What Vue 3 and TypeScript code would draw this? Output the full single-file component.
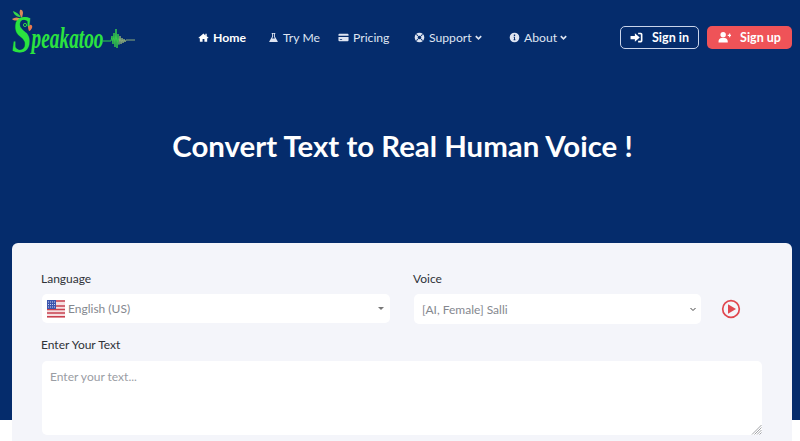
<template>
  <div class="page">
    <div class="hero">
      <header class="topbar">
        <a class="logo" aria-label="Speakatoo">
          <svg class="logo-svg" width="140" height="58" viewBox="0 0 140 58">
            <path d="M20 10c1-1 3 0 3 3l-1 5c-2-2-3-5-2-8z" fill="#d9895a" />
            <path d="M13 11c3 1 6 3 8 6-4 0-7-2-8-6z" fill="#35d64a" />
            <path d="M12 19c3-2 6-2 9 0-3 2-7 2-9 0z" fill="#e08a55" />
            <path d="M28 25c3-1 5 0 4 3-1 2-2 3-3 3-1-2-1-4-1-6z" fill="#e8794e" />
            <circle cx="25" cy="25" r="1.600" fill="none" stroke="#2fd24a" stroke-width="1" />
            <text class="logo-word" transform="translate(12 52) scale(.84 1.250)"><tspan class="logo-cap">S</tspan><tspan class="logo-rest" dy="-3.500">peakatoo</tspan></text>
            <path d="M103 41h8" fill="none" stroke="#2fd24a" stroke-width="1" />
            <path d="M111 41l1-5 1 8 1-11 1 14 1-18 1 19 1-14 1 11" fill="none" stroke="#36c94b" stroke-width="1" />
            <path d="M119 44l1-8 1 8 1-6 1 5 1-4 1 3 1-2h9" fill="none" stroke="#8aa97a" stroke-width="1" />
          </svg>
        </a>

        <nav class="menu">
          <a v-for="item in menu" :key="item.label" class="menu-item" :class="{ active: item.active }" :style="{ width: item.width + 'px' }">
            <svg class="ico" viewBox="0 0 24 24" fill="currentColor"><path :d="item.icon" fill-rule="evenodd" /></svg>
            <span>{{ item.label }}</span>
            <svg v-if="item.drop" class="chev" viewBox="0 0 10 10"><path d="M2 3.500 5 6.500 8 3.500" fill="none" stroke="currentColor" stroke-width="1.800" /></svg>
          </a>
        </nav>

        <div class="auth">
          <a class="btn btn-line">
            <svg class="btn-ico" viewBox="0 0 24 24" fill="currentColor"><path d="M1 9h8V4l9 8-9 8v-5H1zM15 3h5a3 3 0 0 1 3 3v12a3 3 0 0 1-3 3h-5v-3h4a1 1 0 0 0 1-1V7a1 1 0 0 0-1-1h-4z" /></svg>
            Sign in
          </a>
          <a class="btn btn-red">
            <svg class="btn-ico" viewBox="0 0 24 24" fill="currentColor"><circle cx="9.500" cy="7" r="5" /><path d="M1 21v-2c0-3.500 2.500-6 5.500-6h6c3 0 5.500 2.500 5.500 6v2zM18 7h2.500V4.500h2V7H25v2h-2.500v2.500h-2V9H18z" /></svg>
            Sign up
          </a>
        </div>
      </header>

      <h1 class="title">Convert Text to Real Human Voice !</h1>
    </div>

    <main class="card">
      <div class="row">
        <div class="field lang">
          <label>Language</label>
          <div class="lang-box">
            <svg class="flag" width="18" height="18" viewBox="0 0 18 18">
              <rect width="18" height="18" fill="#f6dfe1" />
              <path d="M0 1h18M0 6h18M0 9.500h18M0 13h18M0 16.800h18" stroke="#c8414f" stroke-width="1.500" />
              <rect width="9" height="9" fill="#3c55ad" />
              <path d="M1 2h7M1 4.500h7M1 7h7" stroke="#c9d2f0" stroke-width="1" stroke-dasharray="1 1" />
            </svg>
            <span>English (US)</span>
            <i class="caret"></i>
          </div>
        </div>
        <div class="field voice">
          <label>Voice</label>
          <div class="voice-line">
            <div class="voice-wrap">
              <select class="voice-select">
                <option>[AI, Female] Salli</option>
              </select>
              <svg class="voice-chev" width="8" height="8" viewBox="0 0 8 8"><path d="M1.500 3 4 5.500 6.500 3" fill="none" stroke="#444" stroke-width="1" /></svg>
            </div>
            <svg class="play" width="20" height="20" viewBox="0 0 20 20">
              <circle cx="10" cy="10" r="8.300" fill="none" stroke="#e0474f" stroke-width="1.700" />
              <path d="M7 5.200 15 10 7 14.800z" fill="#e0474f" />
            </svg>
          </div>
        </div>
      </div>
      <label class="text-label">Enter Your Text</label>
      <div class="text-wrap">
        <textarea class="text" placeholder="Enter your text..."></textarea>
        <svg class="grip" width="11" height="11" viewBox="0 0 11 11"><path d="M10.500 1 1 10.500M10.500 3.500 3.500 10.500M10.500 6 6 10.500M10.500 8.500 8.500 10.500" stroke="#8b8d92" stroke-width="0.800" /></svg>
      </div>
    </main>
  </div>
</template>

<script setup lang="ts">
interface MenuItem {
  label: string
  icon: string
  width: number
  active?: boolean
  drop?: boolean
}

const menu: MenuItem[] = [
  { label: 'Home', active: true, width: 70, icon: 'M12 3 1 12.500l1.500 1.500L4 12.800V21h6v-6h4v6h6v-8.200l1.500 1.200 1.500-1.500-4-3.400V4h-3v3.500z' },
  { label: 'Try Me', width: 70, icon: 'M8 2h8v2h-1v6l6 10c.6 1-.1 2-1 2H4c-.9 0-1.600-1-1-2l6-10V4H8zM11 4v6.500L9 14h6l-2-3.500V4z' },
  { label: 'Pricing', width: 76, icon: 'M3 4h18a2 2 0 0 1 2 2v2H1V6a2 2 0 0 1 2-2zM1 11h22v7a2 2 0 0 1-2 2H3a2 2 0 0 1-2-2zM4 15v2h5v-2z' },
  { label: 'Support', width: 95, drop: true, icon: 'M12 1.500a10.500 10.500 0 1 1 0 21 10.500 10.500 0 0 1 0-21zM12 8a4 4 0 1 0 0 8 4 4 0 0 0 0-8zM6 4.500 4.500 6l3.500 3.500L9.500 8zM18 4.500 14.500 8 16 9.500 19.500 6zM8 14.500 4.500 18 6 19.500 9.500 16zM16 14.500 14.500 16l3.500 3.500 1.500-1.500z' },
  { label: 'About', width: 92, drop: true, icon: 'M12 1.500a10.500 10.500 0 1 1 0 21 10.500 10.500 0 0 1 0-21zM10.500 5.500v3h3v-3zM10 10.500v1.500h1v4h-1v2h4v-2h-1v-5.500z' },
]
</script>

<style scoped>
.page {
  position: relative;
  width: 800px;
  height: 441px;
  overflow: hidden;
  background: #fff;
  font-family: Lato, "Open Sans", sans-serif;
}

.hero {
  height: 420px;
  background: #052c6c;
  color: #fff;
}

.topbar {
  display: flex;
  align-items: flex-start;
  height: 75px;
  padding-right: 8px;
}

.logo {
  width: 198px;
  height: 58px;
  flex: none;
}

.logo-svg {
  overflow: visible;
}

.logo-word {
  font-family: "Liberation Serif", serif;
  font-style: italic;
  font-weight: 700;
  fill: #2be33f;
}

.logo-cap {
  font-size: 42px;
}

.logo-rest {
  font-size: 23px;
}

.menu {
  display: flex;
  flex: none;
  width: 422px;
  padding-top: 29px;
}

.menu-item {
  display: flex;
  align-items: center;
  flex: none;
  height: 16px;
  font-size: 12.200px;
  color: #dfe5f2;
}

.menu-item span {
  margin-left: -1px;
}

.menu-item.active {
  font-weight: 700;
  color: #fff;
}

.ico {
  width: 11px;
  height: 11px;
  margin-right: 5px;
  flex: none;
}

.chev {
  width: 9px;
  height: 9px;
  margin-left: 2px;
}

.auth {
  display: flex;
  gap: 8px;
  padding-top: 26px;
}

.btn {
  display: flex;
  align-items: center;
  justify-content: center;
  gap: 9px;
  box-sizing: border-box;
  height: 23px;
  border-radius: 5px;
  font-size: 12.500px;
  font-weight: 700;
  color: #fff;
}

.btn-line {
  width: 79px;
  border: 1px solid #c9d4ea;
}

.btn-red {
  width: 85px;
  background: #ef5358;
}

.btn-ico {
  width: 13px;
  height: 13px;
}

.title {
  margin: 50px 0 0;
  padding-left: 5px;
  text-align: center;
  font-size: 29.400px;
  font-weight: 700;
  line-height: 41px;
}

.card {
  position: absolute;
  left: 12px;
  top: 243px;
  width: 780px;
  height: 260px;
  box-sizing: border-box;
  padding: 28px 30px 0 29px;
  border-radius: 6px;
  background: #f4f5fa;
  font-size: 12px;
  color: #2f3238;
}

.row {
  display: flex;
  gap: 23px;
}

.field label,
.text-label {
  display: block;
  height: 16px;
  line-height: 16px;
}

.lang {
  width: 349px;
}

.voice {
  flex: 1;
}

.lang-box {
  display: flex;
  align-items: center;
  height: 29px;
  margin: 7px 0 0 1px;
  padding: 0 6px 0 5px;
  border-radius: 5px;
  background: #fff;
  color: #85888f;
}

.lang-box span {
  margin-left: 3px;
}

.flag {
  flex: none;
}

.caret {
  margin-left: auto;
  border-top: 3px solid #777;
  border-left: 3px solid transparent;
  border-right: 3px solid transparent;
}

.voice-line {
  display: flex;
  align-items: center;
  margin: 7px 0 0 1px;
}

.voice-wrap {
  position: relative;
  display: flex;
}

.voice-select {
  width: 287px;
  height: 30px;
  padding-left: 8px;
  border: 0;
  border-radius: 5px;
  outline: 0;
  background: #fff;
  font: inherit;
  color: #85888f;
  appearance: none;
}

.voice-chev {
  position: absolute;
  right: 4px;
  top: 11px;
}

.play {
  margin-left: 20px;
  flex: none;
}

.text-label {
  margin-top: 13px;
}

.text-wrap {
  position: relative;
  width: 720px;
  margin: 8px 0 0 1px;
}

.text {
  display: block;
  box-sizing: border-box;
  width: 100%;
  height: 74px;
  padding: 8px;
  border: 0;
  border-radius: 5px;
  outline: 0;
  background: #fff;
  font: inherit;
  color: #85888f;
  resize: none;
}

.text::placeholder {
  color: #9a9da4;
}

.grip {
  position: absolute;
  right: 0;
  bottom: 0;
}
</style>

<style>
html,
body {
  margin: 0;
  background: #fff;
}
</style>
